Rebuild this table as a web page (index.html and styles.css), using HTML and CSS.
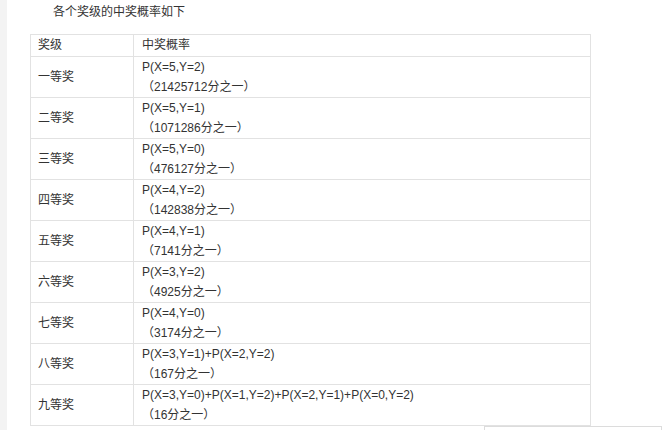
FILE: index.html
```html
<!DOCTYPE html>
<html lang="zh">
<head>
<meta charset="utf-8">
<link rel="stylesheet" href="styles.css">
</head>
<body>
<div class="page">
  <div class="stripe"></div>
  <div class="main">
    <p class="title">各个奖级的中奖概率如下</p>
    <table class="prob">
      <tr class="head"><td class="c1">奖级</td><td class="c2">中奖概率</td></tr>
      <tr><td class="c1">一等奖</td><td class="c2">P(X=5,Y=2)<br>（21425712分之一）</td></tr>
      <tr><td class="c1">二等奖</td><td class="c2">P(X=5,Y=1)<br>（1071286分之一）</td></tr>
      <tr><td class="c1">三等奖</td><td class="c2">P(X=5,Y=0)<br>（476127分之一）</td></tr>
      <tr><td class="c1">四等奖</td><td class="c2">P(X=4,Y=2)<br>（142838分之一）</td></tr>
      <tr><td class="c1">五等奖</td><td class="c2">P(X=4,Y=1)<br>（7141分之一）</td></tr>
      <tr><td class="c1">六等奖</td><td class="c2">P(X=3,Y=2)<br>（4925分之一）</td></tr>
      <tr><td class="c1">七等奖</td><td class="c2">P(X=4,Y=0)<br>（3174分之一）</td></tr>
      <tr><td class="c1">八等奖</td><td class="c2">P(X=3,Y=1)+P(X=2,Y=2)<br>（167分之一）</td></tr>
      <tr><td class="c1">九等奖</td><td class="c2">P(X=3,Y=0)+P(X=1,Y=2)+P(X=2,Y=1)+P(X=0,Y=2)<br>（16分之一）</td></tr>
    </table>
    <p class="after">大乐透中奖概率计算方法如下所示供参考使用</p>
  </div>
</div>
<div class="floatbox"></div>
</body>
</html>
```
FILE: styles.css
```css
html, body {
  margin: 0;
  padding: 0;
  background: #fff;
  height: 100%;
  overflow: hidden;
}
body {
  font-family: "Liberation Sans", "Noto Sans CJK SC", sans-serif;
  font-size: 12px;
  color: #333;
}
.page {
  display: flex;
  min-height: 430px;
}
.stripe {
  width: 7px;
  flex: none;
  background: #f3f3f3;
}
.main {
  flex: 1;
  padding-left: 23px;
}
.title {
  margin: 2px 0 12px;
  line-height: 20px;
  text-indent: 23px;
}
.prob {
  border-collapse: collapse;
  width: 561px;
}
.prob td {
  border: 1px solid #e2e2e2;
  padding: 0 7px;
  line-height: 20px;
  height: 40px;
  vertical-align: middle;
}
.prob .c1 {
  width: 88px;
}
.prob .c2 {
  padding-left: 8px;
}
.prob tr.head td {
  height: 21px;
  line-height: 21px;
}
.after {
  margin: 2px 0 0;
  line-height: 20px;
  text-indent: 24px;
}
.floatbox {
  position: absolute;
  left: 484px;
  top: 426px;
  width: 176px;
  height: 20px;
  border: 1px solid #dcdcdc;
  background: #fff;
}
```
